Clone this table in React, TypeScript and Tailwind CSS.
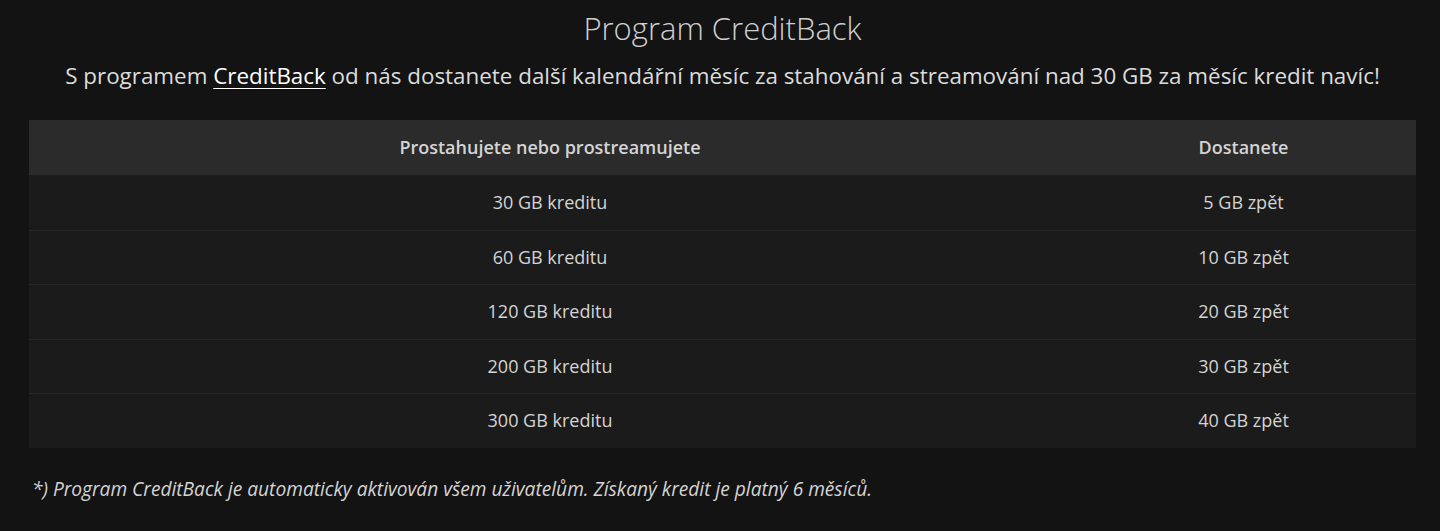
import React from "react";

const rows = [
  ["30 GB kreditu", "5 GB zpět"],
  ["60 GB kreditu", "10 GB zpět"],
  ["120 GB kreditu", "20 GB zpět"],
  ["200 GB kreditu", "30 GB zpět"],
  ["300 GB kreditu", "40 GB zpět"],
];

export default function App() {
  return (
    <div
      className="min-h-[531px] w-full bg-[#131313] text-[#d4d4d4]"
      style={{ fontFamily: '"Open Sans", "Noto Sans", sans-serif' }}
    >
      <div className="pl-[29px] pt-[7px]">
        <h1 className="w-[1387px] text-center text-[31px] font-light leading-[42px] text-[#cfcfcf]">
          Program CreditBack
        </h1>
        <p className="mt-[12px] w-[1387px] text-center text-[22.4px] leading-[30px] text-[#dcdcdc]">
          S programem{" "}
          <a href="#" className="text-white underline underline-offset-[4px] decoration-1">
            CreditBack
          </a>{" "}
          od nás dostanete další kalendářní měsíc za stahování a streamování nad 30 GB za měsíc kredit navíc!
        </p>
        <div className="mt-[29px] w-[1387px]">
          <div className="grid h-[55px] grid-cols-[1042px_1fr] items-center bg-[#2b2b2b] text-[18px] font-semibold text-[#d4d4d4]">
            <div className="text-center">Prostahujete nebo prostreamujete</div>
            <div className="text-center">Dostanete</div>
          </div>
          {rows.map(([a, b], i) => (
            <div
              key={a}
              className={`grid h-[54.5px] grid-cols-[1042px_1fr] items-center bg-[#1b1b1b] text-[18px] text-[#d4d4d4] ${
                i > 0 ? "border-t border-[#282828]" : ""
              }`}
            >
              <div className="text-center">{a}</div>
              <div className="text-center">{b}</div>
            </div>
          ))}
        </div>
        <p className="mt-[27px] pl-[3px] text-[19.15px] italic leading-[28px] text-[#d4d4d4]">
          *) Program CreditBack je automaticky aktivován všem uživatelům. Získaný kredit je platný 6 měsíců.
        </p>
      </div>
    </div>
  );
}
